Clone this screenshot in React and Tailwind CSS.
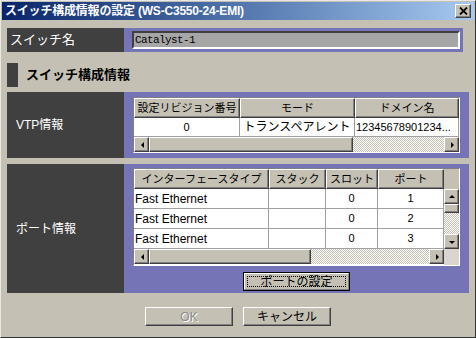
import React from "react";

const raised =
  "border border-t-white border-l-white border-r-[#404040] border-b-[#404040] shadow-[inset_-1px_-1px_0_#808080] bg-[#c4c0b4]";
const dither =
  "bg-[repeating-conic-gradient(#ffffff_0_25%,#c4c0b4_0_50%)] bg-[length:2px_2px]";
const jp = "font-['Liberation_Sans','Noto_Sans_CJK_JP',sans-serif]";

function Arrow({ dir }) {
  const pts = {
    left: "6,7 9,4 9,10",
    right: "6,4 9,7 6,10",
    up: "4,8 7,5 10,8",
    down: "4,6 7,9 10,6",
  }[dir];
  return (
    <div className={`w-[15px] h-[15px] shrink-0 flex items-center justify-center ${raised}`}>
      <svg width="13" height="13" viewBox="0 0 13 13">
        <polygon points={pts} fill="#000" />
      </svg>
    </div>
  );
}

function HeaderCell({ w, children }) {
  return (
    <div
      className={`h-[20px] shrink-0 flex items-center justify-center text-[11px] text-black whitespace-nowrap overflow-hidden ${raised}`}
      style={{ width: w }}
    >
      {children}
    </div>
  );
}

function Cell({ w, align = "center", children }) {
  return (
    <div
      className={`shrink-0 h-full flex items-center border-r border-b border-[#a0a0a0] text-[11px] whitespace-nowrap overflow-hidden ${
        align === "left" ? "justify-start pl-[1px]" : "justify-center"
      }`}
      style={{ width: w }}
    >
      {children}
    </div>
  );
}

function Button({ children, disabled }) {
  return (
    <div
      className={`w-[88px] h-[19px] flex items-center justify-center text-[12px] ${raised} ${
        disabled ? "text-[#8c8c8c] [text-shadow:1px_1px_0_#fff]" : "text-black"
      }`}
    >
      {children}
    </div>
  );
}

export default function App() {
  const vtpCols = [106, 115, 104];
  const portCols = [135, 57, 52, 66];
  const ports = [1, 2, 3];

  return (
    <div className={`w-[476px] h-[338px] bg-[#c4c0b4] border border-t-[#e8e8e8] border-l-[#e8e8e8] border-r-[#303030] border-b-[#303030] flex flex-col ${jp}`}>
      {/* title bar */}
      <div className="mx-[1px] mt-[1px] h-[18px] flex items-center justify-between bg-linear-to-r from-[#0a246a] to-[#a6caf0] pl-[3px] pr-[3px]">
        <span className="text-white font-bold text-[12px] whitespace-nowrap tracking-[-0.2px]">
          スイッチ構成情報の設定 (WS-C3550-24-EMI)
        </span>
        <div className={`w-[16px] h-[14px] flex items-center justify-center ${raised}`}>
          <svg width="9" height="8" viewBox="0 0 9 8">
            <path d="M1 0.5 L8 7.5 M8 0.5 L1 7.5" stroke="#000" strokeWidth="1.8" />
          </svg>
        </div>
      </div>

      <div className="pl-[6px] flex flex-col">
        {/* switch name */}
        <div className="mt-[8px] h-[24px] flex">
          <div className="w-[117px] bg-[#404040] flex items-center pl-[3px] text-white text-[13px]">
            スイッチ名
          </div>
          <div className="w-[339px] bg-[#7474b6] pl-[8px] pr-[3px] py-[3px]">
            <div className="h-full bg-[#a6a6a6] border-2 border-t-[#404040] border-l-[#404040] border-r-white border-b-white flex items-center pl-[1px] font-['Liberation_Mono',monospace] text-[11px] tracking-[-0.6px] text-black">
              Catalyst-1
            </div>
          </div>
        </div>

        {/* section header */}
        <div className="mt-[11px] h-[24px] flex items-center">
          <div className="w-[11px] h-full bg-[#404040]" />
          <span className="ml-[8px] font-bold text-[13px] text-black">スイッチ構成情報</span>
        </div>

        {/* VTP */}
        <div className="mt-[5px] h-[66px] flex">
          <div className="w-[117px] bg-[#404040] flex items-center pl-[9px] text-white text-[12px]">
            VTP情報
          </div>
          <div className="w-[345px] bg-[#7474b6] pl-[9px] pt-[5px]">
            <div className="w-[327px] bg-white border border-t-[#808080] border-l-[#808080] border-r-white border-b-white flex flex-col">
              <div className="flex">
                <HeaderCell w={vtpCols[0]}>設定リビジョン番号</HeaderCell>
                <HeaderCell w={vtpCols[1]}>モード</HeaderCell>
                <HeaderCell w={vtpCols[2]}>ドメイン名</HeaderCell>
              </div>
              <div className="h-[19px] flex text-black">
                <Cell w={vtpCols[0]}>0</Cell>
                <Cell w={vtpCols[1]}>
                  <span className="text-[12px]">トランスペアレント</span>
                </Cell>
                <Cell w={vtpCols[2]} align="left">
                  12345678901234...
                </Cell>
              </div>
              <div className="h-[15px] flex">
                <Arrow dir="left" />
                <div className={`w-[204px] ${raised}`} />
                <div className={`flex-1 ${dither}`} />
                <Arrow dir="right" />
              </div>
            </div>
          </div>
        </div>

        {/* ports */}
        <div className="mt-[6px] h-[129px] flex">
          <div className="w-[117px] bg-[#404040] flex items-center pl-[9px] text-white text-[12px]">
            ポート情報
          </div>
          <div className="w-[345px] bg-[#7474b6] pl-[9px] pt-[4px] flex flex-col">
            <div className="w-[327px] bg-white border border-t-[#808080] border-l-[#808080] border-r-white border-b-white flex flex-col">
              <div className="flex bg-[#c4c0b4]">
                <HeaderCell w={portCols[0]}>インターフェースタイプ</HeaderCell>
                <HeaderCell w={portCols[1]}>スタック</HeaderCell>
                <HeaderCell w={portCols[2]}>スロット</HeaderCell>
                <HeaderCell w={portCols[3]}>ポート</HeaderCell>
              </div>
              <div className="flex">
                <div className="flex flex-col">
                  {ports.map((p) => (
                    <div key={p} className="h-[20px] flex text-black">
                      <Cell w={portCols[0]} align="left">
                        <span className="text-[12px]">Fast Ethernet</span>
                      </Cell>
                      <Cell w={portCols[1]} />
                      <Cell w={portCols[2]}>0</Cell>
                      <Cell w={portCols[3]}>{p}</Cell>
                    </div>
                  ))}
                </div>
                <div className="w-[15px] flex flex-col">
                  <Arrow dir="up" />
                  <div className={`h-[9px] ${raised}`} />
                  <div className={`flex-1 ${dither}`} />
                  <Arrow dir="down" />
                </div>
              </div>
              <div className="h-[16px] flex items-start">
                <Arrow dir="left" />
                <div className={`w-[162px] h-[15px] ${raised}`} />
                <div className={`flex-1 h-[15px] ${dither}`} />
                <Arrow dir="right" />
                <div className="w-[15px] h-[16px] bg-[#d8d6ce]" />
              </div>
            </div>
            <div className="mt-[6px] ml-[110px] w-[107px] h-[19px] border border-black bg-[#c4c0b4]">
              <div className="h-full border border-t-white border-l-white border-r-[#808080] border-b-[#808080] flex items-center justify-center p-[2px]">
                <div className="w-full h-full border border-dotted border-black flex items-center justify-center text-[12px] text-black">
                  ポートの設定
                </div>
              </div>
            </div>
          </div>
        </div>
      </div>

      {/* bottom buttons */}
      <div className="mt-[14px] flex justify-center gap-[10px]">
        <Button disabled>OK</Button>
        <Button>キャンセル</Button>
      </div>
    </div>
  );
}
